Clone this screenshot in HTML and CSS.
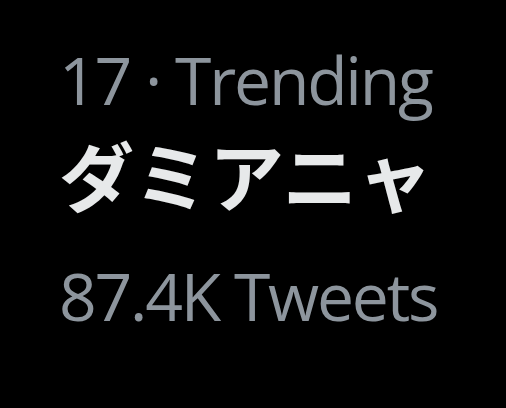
FILE: index.html
```html
<!DOCTYPE html>
<html lang="ja">
<head>
<meta charset="utf-8">
<link rel="stylesheet" href="styles.css">
</head>
<body>
<div class="trend">
  <div class="meta">17 · Trending</div>
  <div class="name">ダミアニャ</div>
  <div class="count">87.4K Tweets</div>
</div>
</body>
</html>
```
FILE: styles.css
```css
html, body {
  margin: 0;
  padding: 0;
  background: #000;
  width: 506px;
  height: 408px;
  overflow: hidden;
}
.trend {
  padding: 36px 0 0 59px;
  display: flex;
  flex-direction: column;
}
.meta, .count {
  font-family: "Open Sans", "Noto Sans", sans-serif;
  font-size: 66px;
  line-height: 86px;
  letter-spacing: -2.2px;
  color: #8d959d;
  white-space: nowrap;
}
.name {
  font-family: "Noto Sans CJK JP", sans-serif;
  font-weight: 700;
  font-size: 75px;
  line-height: 104px;
  color: #e7e9ea;
  white-space: nowrap;
}
.count {
  margin-top: 26px;
}
```
